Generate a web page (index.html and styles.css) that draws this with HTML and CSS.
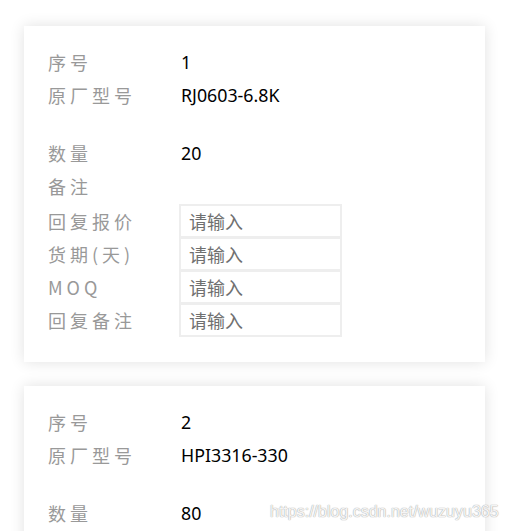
FILE: index.html
```html
<!DOCTYPE html>
<html lang="zh-CN">
<head>
    <meta charset="UTF-8">
    <meta name="viewport" content="width=device-width, initial-scale=1.0">
    <title>询价回复</title>
    <link rel="stylesheet" href="styles.css">
</head>
<body>
    <div class="list">
        <div class="card">
            <div class="row"><span class="label">序号</span><span class="value">1</span></div>
            <div class="row"><span class="label">原厂型号</span><span class="value">RJ0603-6.8K</span></div>
            <div class="row spaced"><span class="label">数量</span><span class="value">20</span></div>
            <div class="row"><span class="label">备注</span><span class="value"></span></div>
            <div class="inputs">
                <div class="row input-row"><span class="label">回复报价</span><input class="field" placeholder="请输入"></div>
                <div class="row input-row"><span class="label">货期(天)</span><input class="field" placeholder="请输入"></div>
                <div class="row input-row"><span class="label">MOQ</span><input class="field" placeholder="请输入"></div>
                <div class="row input-row"><span class="label">回复备注</span><input class="field" placeholder="请输入"></div>
            </div>
        </div>

        <div class="card">
            <div class="row"><span class="label">序号</span><span class="value">2</span></div>
            <div class="row"><span class="label">原厂型号</span><span class="value">HPI3316-330</span></div>
            <div class="row spaced"><span class="label">数量</span><span class="value">80</span></div>
            <div class="row"><span class="label">备注</span><span class="value"></span></div>
            <div class="inputs">
                <div class="row input-row"><span class="label">回复报价</span><input class="field" placeholder="请输入"></div>
                <div class="row input-row"><span class="label">货期(天)</span><input class="field" placeholder="请输入"></div>
                <div class="row input-row"><span class="label">MOQ</span><input class="field" placeholder="请输入"></div>
                <div class="row input-row"><span class="label">回复备注</span><input class="field" placeholder="请输入"></div>
            </div>
        </div>
    </div>

    <div class="watermark">https://blog.csdn.net/wuzuyu365</div>
</body>
</html>
```

FILE: styles.css
```css
html, body {
    margin: 0;
    height: 100%;
    overflow: hidden;
}
body {
    font-family: "Noto Sans", "Noto Sans CJK SC", sans-serif;
    background-color: #ffffff;
    color: #000;
    position: relative;
}
.list {
    display: flex;
    flex-direction: column;
    gap: 24px;
    padding: 26px 21px 0 24px;
}
.card {
    background-color: #fff;
    box-shadow: 0 0 14px rgba(0, 0, 0, 0.12);
    padding: 19px 24px 25px 24px;
}
.row {
    display: flex;
    align-items: center;
    height: 33px;
}
.spaced {
    margin-top: 25px;
}
.label {
    width: 131px;
    flex-shrink: 0;
    font-family: "Noto Sans CJK SC", sans-serif;
    font-size: 18px;
    letter-spacing: 4px;
    color: #999;
}
.value {
    padding-left: 2px;
    font-size: 17.8px;
    color: #000;
}
.inputs {
    margin-top: 2px;
}
.input-row {
    height: 34px;
    margin-top: -1px;
}
.input-row:first-child {
    margin-top: 0;
}
.field {
    box-sizing: border-box;
    width: 163px;
    height: 34px;
    border: 2px solid #eeeeee;
    padding: 0 8px;
    font-family: "Noto Sans CJK SC", sans-serif;
    font-size: 18px;
    outline: none;
}
.field::placeholder {
    color: #707070;
}
.watermark {
    position: absolute;
    left: 270px;
    top: 503px;
    font-family: "Liberation Sans", Arial, sans-serif;
    font-size: 16px;
    color: rgba(255, 255, 255, 0.9);
    text-shadow: 0 0 1px #aaa, 0 0 1px #aaa;
}
```
